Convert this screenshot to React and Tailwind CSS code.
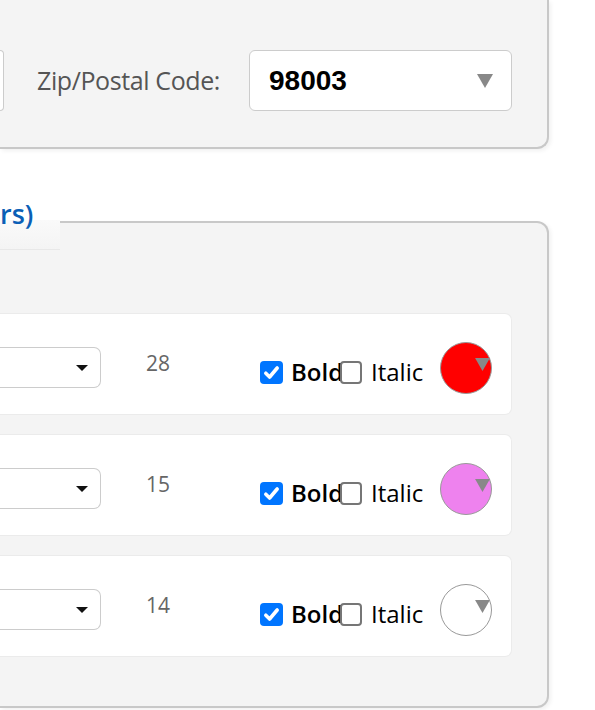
import React from 'react';

const rows = [
  { size: 28, color: '#ff0000' },
  { size: 15, color: '#ee82ee' },
  { size: 14, color: '#ffffff' },
];

const Caret = ({ className }) => (
  <svg className={className} viewBox="0 0 16 14">
    <polygon points="0,0 16,0 8,14" fill="currentColor" />
  </svg>
);

const Checked = () => (
  <span className="w-[23px] h-[23px] shrink-0 flex items-center justify-center rounded-[4px] bg-[#0075ff]">
    <svg className="w-[19px] h-[19px]" viewBox="0 0 16 16">
      <path d="M3.2 8.6 L6.4 11.8 L12.8 4.2" fill="none" stroke="#fff" strokeWidth="3" strokeLinecap="round" strokeLinejoin="round" />
    </svg>
  </span>
);

const Unchecked = () => (
  <span className="relative z-10 w-[22px] h-[23px] shrink-0 rounded-[4px] bg-white border-2 border-[#767676]" />
);

const Row = ({ size, color }) => (
  <div className="flex items-center h-[102px] pt-[7px] pr-[19px] bg-white border border-l-0 border-[#ebebeb] rounded-r-[7px]">
    <div className="w-[101px] h-[41px] flex items-center justify-end pr-[12px] bg-white border border-l-0 border-[#cccccc] rounded-r-[7px]">
      <svg className="w-[12px] h-[6px]" viewBox="0 0 12 6">
        <polygon points="0,0 12,0 6,6" fill="#111" />
      </svg>
    </div>
    <div className="w-[114px] text-center text-[21px] text-[#666] mb-[7px]">{size}</div>
    <div className="flex items-center ml-[45px] mt-[9px]">
      <div className="flex items-center w-[80px] whitespace-nowrap">
        <Checked />
        <span className="ml-[8px] text-[24px] font-semibold text-black leading-none">Bold</span>
      </div>
      <div className="flex items-center">
        <Unchecked />
        <span className="ml-[9px] text-[24px] text-black leading-none">Italic</span>
      </div>
    </div>
    <div
      className="ml-auto relative w-[52px] h-[52px] rounded-full border border-[#999]"
      style={{ backgroundColor: color }}
    >
      <Caret className="absolute right-[1px] top-[15px] w-[15px] h-[13px] text-[#888]" />
    </div>
  </div>
);

export default function App() {
  return (
    <div className="w-[595px] h-[710px] overflow-hidden bg-white font-['Open_Sans',sans-serif]">
      <div className="w-[549px] flex items-center pt-[50px] pb-[36px] bg-[#f4f4f4] border-r-2 border-b-2 border-[#c8c8c8] rounded-br-[12px] shadow-[2px_2px_4px_rgba(0,0,0,0.06)]">
        <div className="w-[4px] h-[61px] bg-white border border-l-0 border-[#cccccc] rounded-r-[6px]" />
        <span className="ml-[33px] w-[212px] text-[25px] tracking-[-0.4px] text-[#555]">Zip/Postal Code:</span>
        <div className="w-[263px] h-[61px] flex items-center justify-between pl-[19px] pr-[18px] bg-white border border-[#cccccc] rounded-[6px]">
          <span className="font-['Liberation_Sans',Arial,sans-serif] font-bold text-[28px] text-black">98003</span>
          <Caret className="w-[16px] h-[14px] text-[#888]" />
        </div>
      </div>

      <div className="relative mt-[72px] w-[549px] bg-[#f4f4f4] border-t-2 border-r-2 border-b-2 border-[#c8c8c8] rounded-r-[12px] shadow-[2px_2px_4px_rgba(0,0,0,0.06)]">
        <div className="absolute left-0 top-[-3px] w-[60px] h-[30px] bg-gradient-to-b from-[#fafafa] to-[#f4f4f4] border-b border-[#e8e8e8]" />
        <span className="absolute left-0 top-[-27px] text-[27px] font-semibold text-[#0b5fb6] leading-[36px]">rs)</span>
        <div className="flex flex-col gap-[19px] pt-[90px] pb-[49px] pr-[35px]">
          {rows.map((r) => (
            <Row key={r.size} size={r.size} color={r.color} />
          ))}
        </div>
      </div>
    </div>
  );
}
